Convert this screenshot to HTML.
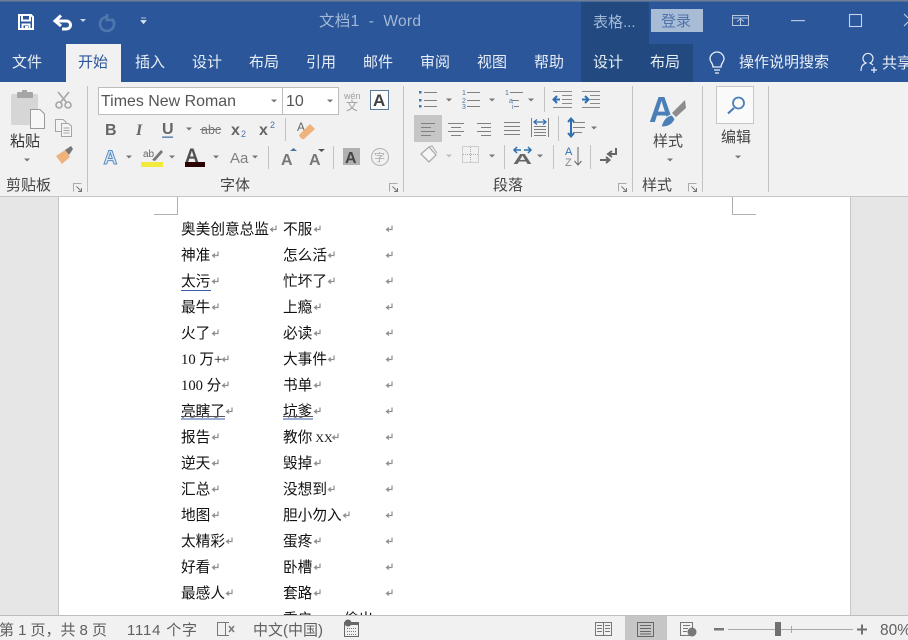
<!DOCTYPE html>
<html><head><meta charset="utf-8"><style>
html,body{margin:0;padding:0;width:908px;height:640px;overflow:hidden;background:#e6e6e6}
svg{display:block}
text{font-family:"Liberation Sans","Noto Sans CJK SC",sans-serif;white-space:pre}
.tab{font-size:15px;fill:#e9eef6}
.lb{font-size:15px;fill:#444}
.st{font-size:15px;fill:#606060}
.d{font-family:"Liberation Serif","WenQuanYi Zen Hei",sans-serif;font-size:14.67px;fill:#111}
</style></head><body>
<svg width="908" height="640" viewBox="0 0 908 640" xmlns="http://www.w3.org/2000/svg">
<defs>
<path id="dd" d="M-3 -1.500H3L0 1.500Z" fill="#777"/>
<path id="rm" d="M7 .5V4.500H2M4 2.500L1.500 4.500L4 6.500" fill="none" stroke="#8f8f8f" stroke-width="1.200"/>
<g id="launch" fill="none" stroke="#777"><path d="M.5 8.500V.5H8.500" stroke="#aaa"/><path d="M3.500 3.500L8 8M8.500 5V8.500H5"/></g>
</defs>
<!-- backgrounds -->
<rect width="908" height="640" fill="#e6e6e6"/>
<rect width="908" height="82" fill="#2b579a"/>
<rect width="908" height="1.500" fill="#6f7f98"/>
<rect x="581" y="2" width="68" height="42" fill="#234a80"/>
<rect x="581" y="44" width="112" height="38" fill="#234a80"/>
<rect x="66" y="44" width="55" height="38" fill="#f1f1f1"/>
<rect y="82" width="908" height="115" fill="#f1f1f1"/>
<rect y="196" width="908" height="1" fill="#c6c6c6"/>
<!-- QAT -->
<path d="M19 15H31L33 17V29H19ZM22 15V20.500H30V15M22.500 29V24.500H29.500V29" fill="none" stroke="#fff" stroke-width="2"/>
<rect x="25" y="26" width="3" height="3.500" fill="#fff"/>
<path d="M56 21H66C72 21 72 29 66 29H62" fill="none" stroke="#fff" stroke-width="3"/>
<path d="M61 15.500L55 21L61 26" fill="none" stroke="#fff" stroke-width="3"/>
<path d="M80 19H86L83 22Z" fill="#c9d5e8"/>
<path d="M106 17A7 7 0 1 0 112 19M107 14V20H113" fill="none" stroke="#4f76ad" stroke-width="2.600"/>
<path d="M141 18H146M141 20.500H146L143.500 23.500Z" fill="#dfe6f1" stroke="#dfe6f1" stroke-width=".8"/>
<text x="319" y="26" textLength="102" lengthAdjust="spacing" style="font-size:15.500px;fill:#a3b8d6">文档1  -  Word</text>
<!-- title right -->
<text x="593" y="27" style="font-size:15px;fill:#a3b8d6">表格...</text>
<rect x="651" y="9" width="52" height="23" fill="#a9bcd6"/>
<text x="661" y="26" style="font-size:15px;fill:#4f74aa">登录</text>
<path d="M732.500 15.500H748.500V25.500H732.500ZM733 18H748M737 21.500L740.500 19L744 21.500M740.500 19.500V25" fill="none" stroke="#b5c6de"/>
<rect x="791" y="20" width="14" height="1.200" fill="#b5c6de"/>
<rect x="849.500" y="14.500" width="12" height="12" fill="none" stroke="#c5d2e5" stroke-width="1.100"/>
<path d="M904 14L908 18M908 22L904 26" stroke="#c5d2e5" fill="none"/>
<!-- tabs -->
<text class="tab" x="12" y="67">文件</text>
<text x="78" y="67" style="font-size:15px;fill:#2b579a">开始</text>
<text class="tab" x="135" y="67">插入</text>
<text class="tab" x="192" y="67">设计</text>
<text class="tab" x="249" y="67">布局</text>
<text class="tab" x="306" y="67">引用</text>
<text class="tab" x="363" y="67">邮件</text>
<text class="tab" x="420" y="67">审阅</text>
<text class="tab" x="477" y="67">视图</text>
<text class="tab" x="534" y="67">帮助</text>
<text class="tab" x="593" y="67">设计</text>
<text class="tab" x="650" y="67">布局</text>
<path d="M713 67C713 63 710 62 710 59A7 7 0 0 1 724 59C724 62 721 63 721 67ZM714 70H720M715 73H719" fill="none" stroke="#e8eef6" stroke-width="1.300"/>
<text class="tab" x="739" y="67">操作说明搜索</text>
<path d="M861 71C861 65 864 64 866 63A5 5 0 1 1 870 63C871 63.500 872 64 873 65M871 70H877M874 67V73" fill="none" stroke="#e8eef6" stroke-width="1.200"/>
<text class="tab" x="882" y="68">共享</text>

<!-- separators -->
<g fill="#c2c2c2">
<rect x="87" y="86" width="1" height="106"/><rect x="403" y="86" width="1" height="106"/><rect x="632" y="86" width="1" height="106"/><rect x="702" y="86" width="1" height="106"/><rect x="768" y="86" width="1" height="106"/>
<rect x="285" y="118" width="1" height="23"/><rect x="268" y="146" width="1" height="23"/><rect x="333" y="146" width="1" height="23"/>
<rect x="544" y="87" width="1" height="25"/><rect x="558" y="116" width="1" height="25"/><rect x="504" y="145" width="1" height="24"/><rect x="553" y="145" width="1" height="24"/><rect x="590" y="145" width="1" height="24"/>
</g>
<!-- clipboard -->
<rect x="11" y="94" width="27" height="31" rx="1.500" fill="#d6d6d6"/>
<rect x="17" y="92" width="16" height="6" rx="1" fill="#a6a6a6"/>
<rect x="22" y="90" width="5" height="4" fill="#a6a6a6"/>
<path d="M30.500 109.500H40L44.500 114V128.500H30.500Z" fill="#f7f7f7" stroke="#9a9a9a"/>
<text x="10" y="146" style="font-size:15px;fill:#333">粘贴</text>
<use href="#dd" x="27" y="160"/>
<g fill="none" stroke="#a6a6a6" stroke-width="1.600"><path d="M58 92L67 103M69 92L60 103"/><circle cx="59" cy="105" r="3"/><circle cx="68" cy="105" r="3"/></g>
<g fill="#f4f4f4" stroke="#a4a4a4"><path d="M55.500 119.500H63L66 122V131.500H55.500Z"/><path d="M61.500 123.500H68.500L71.500 126V136.500H61.500Z"/></g>
<path d="M63.500 128H69.500M63.500 130.500H69.500M63.500 133H69.500" stroke="#a4a4a4"/>
<path d="M56 156L65 150L70 157L62 164Z" fill="#eeb27a"/>
<path d="M65 150L71 146L73 149L69 155" fill="#777"/>
<text x="6" y="190" class="lb">剪贴板</text>
<use href="#launch" x="73" y="183"/>
<!-- font boxes -->
<rect x="98.500" y="87.500" width="184" height="27" fill="#fff" stroke="#bcbcbc"/>
<rect x="282.500" y="87.500" width="56" height="27" fill="#fff" stroke="#bcbcbc"/>
<text x="101" y="106" textLength="135" lengthAdjust="spacingAndGlyphs" style="font-size:16px;fill:#555">Times New Roman</text>
<text x="286" y="106" style="font-size:16px;fill:#555">10</text>
<use href="#dd" x="274" y="101"/><use href="#dd" x="330" y="101"/>
<text x="344" y="99" style="font-size:9px;fill:#a0a0a0">wén</text>
<text x="346" y="110" style="font-size:12px;fill:#a0a0a0">文</text>
<rect x="370.500" y="90.500" width="18" height="19" fill="#fbfbfb" stroke="#5b7894"/>
<text x="373" y="106" style="font-size:17px;font-weight:bold;fill:#404040">A</text>
<!-- row2 -->
<text x="105" y="135" style="font-size:16px;font-weight:bold;fill:#666">B</text>
<text x="136" y="135" style="font-size:16px;font-weight:bold;font-style:italic;fill:#666;font-family:'Liberation Serif'">I</text>
<text x="162" y="134" style="font-size:16px;font-weight:bold;fill:#666">U</text>
<rect x="162" y="136.500" width="11" height="1.300" fill="#4a74a6"/>
<use href="#dd" x="189" y="129"/>
<text x="201" y="134" style="font-size:12.500px;fill:#777">abc</text><rect x="200" y="129" width="21" height="1" fill="#777"/>
<text x="231" y="135" style="font-size:16px;font-weight:bold;fill:#666">x</text><text x="241" y="137" style="font-size:9px;fill:#4a74a6">2</text>
<text x="259" y="135" style="font-size:16px;font-weight:bold;fill:#666">x</text><text x="270" y="128" style="font-size:9px;fill:#4a74a6">2</text>
<text x="297" y="131" style="font-size:12px;fill:#666">A</text>
<path d="M299 135L310 124L315 129L304 139Q301 140 299 135Z" fill="#eeb27a"/>
<!-- row3 -->
<text x="103.500" y="164" style="font-size:19px;font-weight:bold;fill:#dbe8f6;stroke:#5b8cc4;stroke-width:1">A</text>
<use href="#dd" x="129" y="157"/>
<text x="143" y="157" style="font-size:10px;fill:#666">ab</text>
<path d="M152 160L161 150L163 152L155 161Z" fill="#777"/>
<rect x="141" y="162" width="22" height="5" fill="#f4ea3c"/>
<use href="#dd" x="172" y="157"/>
<text x="185" y="162" style="font-size:19px;font-weight:bold;fill:#505050">A</text>
<rect x="185" y="162" width="20" height="5" fill="#2c0203"/>
<use href="#dd" x="216" y="157"/>
<text x="230" y="163" style="font-size:15px;fill:#808080">Aa</text>
<use href="#dd" x="255" y="157"/>
<text x="281" y="165" style="font-size:16px;font-weight:bold;fill:#777">A</text><path d="M290 151H297L293.500 148Z" fill="#4a74a6"/>
<text x="309" y="165" style="font-size:16px;font-weight:bold;fill:#777">A</text><path d="M318 149H325L321.500 152Z" fill="#555"/>
<rect x="343" y="148" width="17" height="17" fill="#b0b0b0"/>
<text x="345" y="163" style="font-size:16px;font-weight:bold;fill:#444">A</text>
<circle cx="380" cy="157" r="8.500" fill="none" stroke="#b8b8b8" stroke-width="1.200"/>
<text x="374" y="161" style="font-size:11px;fill:#a8a8a8">字</text>
<text x="220" y="190" class="lb">字体</text>
<use href="#launch" x="389" y="183"/>
<!-- paragraph row1 -->
<g stroke="#808080" fill="none">
<path d="M424 92.500H437M424 100.500H437M424 106.500H437"/>
<path d="M467 92.500H480M467 100.500H480M467 106.500H480"/>
<path d="M510 92.500H523M512 100.500H519M514 106.500H519"/>
</g>
<g fill="#3f78b8"><rect x="419" y="91" width="2.500" height="2.500"/><rect x="419" y="99" width="2.500" height="2.500"/><rect x="419" y="105" width="2.500" height="2.500"/></g>
<g style="font-size:7px;fill:#4a74a6"><text x="462" y="95">1</text><text x="462" y="103">2</text><text x="462" y="109">3</text><text x="505" y="95">1</text><text x="509" y="103">a</text><text x="512" y="109">i</text></g>
<use href="#dd" x="449" y="100"/><use href="#dd" x="492" y="100"/><use href="#dd" x="531" y="100"/>
<g stroke="#8a8a8a" fill="none"><path d="M553 91.500H572M562 95.500H572M562 99.500H572M562 103.500H572M553 107.500H572"/><path d="M582 91.500H600M590 95.500H600M590 99.500H600M590 103.500H600M582 107.500H600"/></g>
<path d="M560 99.500H554M557 96L553.500 99.500L557 103" fill="none" stroke="#2f6fb0" stroke-width="2"/>
<path d="M582 99.500H588M585 96L588.500 99.500L585 103" fill="none" stroke="#2f6fb0" stroke-width="2"/>
<!-- row 2 -->
<rect x="414" y="115" width="28" height="27" fill="#c6c6c6"/>
<g stroke="#808080" fill="none">
<path d="M421 123.500H435M421 127.500H431M421 131.500H435M421 135.500H431"/>
<path d="M448 123.500H464M451 127.500H461M448 131.500H464M451 135.500H461"/>
<path d="M477 123.500H491M481 127.500H491M477 131.500H491M481 135.500H491"/>
<path d="M504 122.500H520M504 126.500H520M504 130.500H520M504 134.500H520"/>
<path d="M531.500 118V137M548.500 118V137M534 126.500H546M534 129.500H546M534 132.500H546M534 135.500H546" />
<path d="M573 122.500H585M573 127.500H585M573 132.500H582"/>
</g>
<path d="M534 122H546M537 119.500L534 122L537 124.500M543 119.500L546 122L543 124.500" stroke="#2f6fb0" fill="none" stroke-width="1.300"/>
<path d="M571 119V136M568 122L571 118.500L574 122M568 133L571 136.500L574 133" stroke="#2f6fb0" fill="none" stroke-width="2"/>
<use href="#dd" x="594" y="128"/>
<!-- row 3 -->
<path d="M421 154L429 147L436 155L429 162Z" fill="#f6f6f6" stroke="#aaa" stroke-width="1.300"/>
<path d="M429 147L432 146L437 153" fill="none" stroke="#aaa"/>
<use href="#dd" x="449" y="156" opacity=".4"/>
<rect x="462.500" y="146.500" width="16" height="16" fill="none" stroke="#aaa" stroke-dasharray="1 1"/>
<path d="M470.500 147V162M463 154.500H478" stroke="#aaa" stroke-dasharray="1 1"/>
<use href="#dd" x="492" y="156"/>
<text x="513" y="164" style="font-size:15px;font-weight:bold;fill:#666" textLength="19" lengthAdjust="spacingAndGlyphs">A</text>
<path d="M514 150H521M517 147L514 150L517 153M531 150H524M528 147L531 150L528 153" stroke="#2f6fb0" fill="none" stroke-width="1.500"/>
<use href="#dd" x="540" y="156"/>
<text x="565" y="155" style="font-size:11px;fill:#2f6fb0">A</text><text x="565" y="166" style="font-size:11px;fill:#888">Z</text>
<path d="M578 147V165M574.500 161L578 165L581.500 161" stroke="#666" fill="none"/>
<path d="M616 148V154H609M612 151L608 154L612 157" fill="none" stroke="#666" stroke-width="2"/>
<path d="M600 160H609M606 157L609.500 160L606 163" fill="none" stroke="#666" stroke-width="2"/>
<text x="493" y="190" class="lb">段落</text>
<use href="#launch" x="618" y="183"/>
<!-- styles -->
<text x="649" y="122" style="font-size:36px;font-weight:bold;fill:#4a7fb8" textLength="25" lengthAdjust="spacingAndGlyphs">A</text>
<path d="M672 113L685 100L686 108L676 117Z" fill="#8c8c8c"/>
<path d="M661 127Q664 116 672 115L675 119Q672 127 661 127Z" fill="#4a7fb8" stroke="#f1f1f1"/>
<text x="653" y="146" style="font-size:15px;fill:#444">样式</text>
<use href="#dd" x="670" y="160"/>
<text x="642" y="190" class="lb">样式</text>
<use href="#launch" x="688" y="183"/>
<!-- edit -->
<rect x="716.500" y="86.500" width="37" height="37" fill="#fafafa" stroke="#c6c6c6"/>
<circle cx="738.500" cy="103" r="5.500" fill="none" stroke="#4a7fb8" stroke-width="1.800"/>
<path d="M734 108L728 113.500" stroke="#4a7fb8" stroke-width="2.200"/>
<text x="721" y="142" style="font-size:15px;fill:#444">编辑</text>
<use href="#dd" x="738" y="157"/>

<!-- page -->
<rect x="58" y="197" width="793" height="418" fill="#fff"/>
<rect x="58" y="197" width="1" height="418" fill="#c6c6c6"/>
<rect x="850" y="197" width="1" height="418" fill="#c6c6c6"/>
<path d="M154 214.500H177.500V197M732.500 197V214.500H756" fill="none" stroke="#b0b0b0"/>
<!-- doc rows -->
<g>
<text class="d" x="181" y="234">奥美创意总监</text><use href="#rm" x="269" y="225"/><text class="d" x="283" y="234">不服</text><use href="#rm" x="313" y="225"/><use href="#rm" x="385" y="225"/>
<text class="d" x="181" y="260">神准</text><use href="#rm" x="211" y="251"/><text class="d" x="283" y="260">怎么活</text><use href="#rm" x="327" y="251"/><use href="#rm" x="385" y="251"/>
<text class="d" x="181" y="286">太污</text><use href="#rm" x="211" y="277"/><text class="d" x="283" y="286">忙坏了</text><use href="#rm" x="327" y="277"/><use href="#rm" x="385" y="277"/>
<text class="d" x="181" y="312">最牛</text><use href="#rm" x="211" y="303"/><text class="d" x="283" y="312">上瘾</text><use href="#rm" x="313" y="303"/><use href="#rm" x="385" y="303"/>
<text class="d" x="181" y="338">火了</text><use href="#rm" x="211" y="329"/><text class="d" x="283" y="338">必读</text><use href="#rm" x="313" y="329"/><use href="#rm" x="385" y="329"/>
<text class="d" x="181" y="364">10 万+</text><use href="#rm" x="221" y="355"/><text class="d" x="283" y="364">大事件</text><use href="#rm" x="327" y="355"/><use href="#rm" x="385" y="355"/>
<text class="d" x="181" y="390">100 分</text><use href="#rm" x="221" y="381"/><text class="d" x="283" y="390">书单</text><use href="#rm" x="313" y="381"/><use href="#rm" x="385" y="381"/>
<text class="d" x="181" y="416">亮瞎了</text><use href="#rm" x="225" y="407"/><text class="d" x="283" y="416">坑爹</text><use href="#rm" x="313" y="407"/><use href="#rm" x="385" y="407"/>
<text class="d" x="181" y="442">报告</text><use href="#rm" x="211" y="433"/><text class="d" x="283" y="442">教你<tspan style="font-size:12px"> XX</tspan></text><use href="#rm" x="331" y="433"/><use href="#rm" x="385" y="433"/>
<text class="d" x="181" y="468">逆天</text><use href="#rm" x="211" y="459"/><text class="d" x="283" y="468">毁掉</text><use href="#rm" x="313" y="459"/><use href="#rm" x="385" y="459"/>
<text class="d" x="181" y="494">汇总</text><use href="#rm" x="211" y="485"/><text class="d" x="283" y="494">没想到</text><use href="#rm" x="327" y="485"/><use href="#rm" x="385" y="485"/>
<text class="d" x="181" y="520">地图</text><use href="#rm" x="211" y="511"/><text class="d" x="283" y="520">胆小勿入</text><use href="#rm" x="342" y="511"/><use href="#rm" x="385" y="511"/>
<text class="d" x="181" y="546">太精彩</text><use href="#rm" x="225" y="537"/><text class="d" x="283" y="546">蛋疼</text><use href="#rm" x="313" y="537"/><use href="#rm" x="385" y="537"/>
<text class="d" x="181" y="572">好看</text><use href="#rm" x="211" y="563"/><text class="d" x="283" y="572">卧槽</text><use href="#rm" x="313" y="563"/><use href="#rm" x="385" y="563"/>
<text class="d" x="181" y="598">最感人</text><use href="#rm" x="225" y="589"/><text class="d" x="283" y="598">套路</text><use href="#rm" x="313" y="589"/><use href="#rm" x="385" y="589"/>
<text class="d" x="283" y="624">重启</text><text class="d" x="344" y="624">偷出</text>
</g>
<rect x="181" y="290" width="30" height="1" fill="#3a5da8"/>
<rect x="181" y="416" width="44" height="1" fill="#555"/><rect x="181" y="418.500" width="44" height="1" fill="#3a5da8"/>
<rect x="283" y="416" width="30" height="1" fill="#555"/><rect x="283" y="418.500" width="30" height="1" fill="#3a5da8"/>

<!-- status -->
<rect y="615" width="908" height="25" fill="#f1f1f1"/>
<rect y="615" width="908" height="1" fill="#bdbdbd"/>
<text class="st" x="-1" y="635" textLength="108" lengthAdjust="spacing">第 1 页，共 8 页</text>
<text class="st" x="127" y="635" textLength="70" lengthAdjust="spacing">1114 个字</text>
<path d="M217.500 622.500H225.500V635.500H217.500ZM225.500 622.500H229M225.500 635.500H229" fill="none" stroke="#777"/>
<path d="M229 626L234 632M234 626L229 632" stroke="#777" stroke-width="1.500"/>
<text class="st" x="253" y="635" textLength="70" lengthAdjust="spacing">中文(中国)</text>
<circle cx="348" cy="623" r="3.500" fill="#666"/>
<rect x="344.500" y="622.500" width="14" height="14" fill="none" stroke="#666"/>
<rect x="351" y="622" width="8" height="3" fill="#666"/>
<path d="M347 628.500H357M347 631.500H357M347 634.500H357" stroke="#777" stroke-dasharray="1 1"/>
<path d="M595.500 622.500H603.500V635.500H595.500ZM603.500 622.500H611.500V635.500H603.500ZM597 625.500H602M597 628.500H602M597 631.500H602M605 625.500H610M605 628.500H610M605 631.500H610" fill="none" stroke="#777"/>
<rect x="625" y="616" width="42" height="24" fill="#c6c6c6"/>
<path d="M637.500 622.500H653.500V636.500H637.500ZM640 625.500H651M640 628.500H651M640 631.500H651M640 634H651" fill="none" stroke="#666"/>
<path d="M680.500 622.500H692.500V635.500H680.500ZM683 625.500H690M683 628.500H688M683 631.500H687" fill="none" stroke="#777"/>
<circle cx="692" cy="632" r="4.500" fill="#777"/>
<rect x="714" y="628" width="10" height="2.500" fill="#777"/>
<rect x="728" y="629" width="125" height="1" fill="#a8a8a8"/>
<rect x="791" y="626" width="1" height="7" fill="#a8a8a8"/>
<rect x="775" y="622" width="6" height="14" fill="#707070"/>
<path d="M857 629.500H867M862 624.500V634.500" stroke="#707070" stroke-width="2"/>
<text x="880" y="635" style="font-size:15.500px;fill:#606060">80%</text>
</svg>
</body></html>
